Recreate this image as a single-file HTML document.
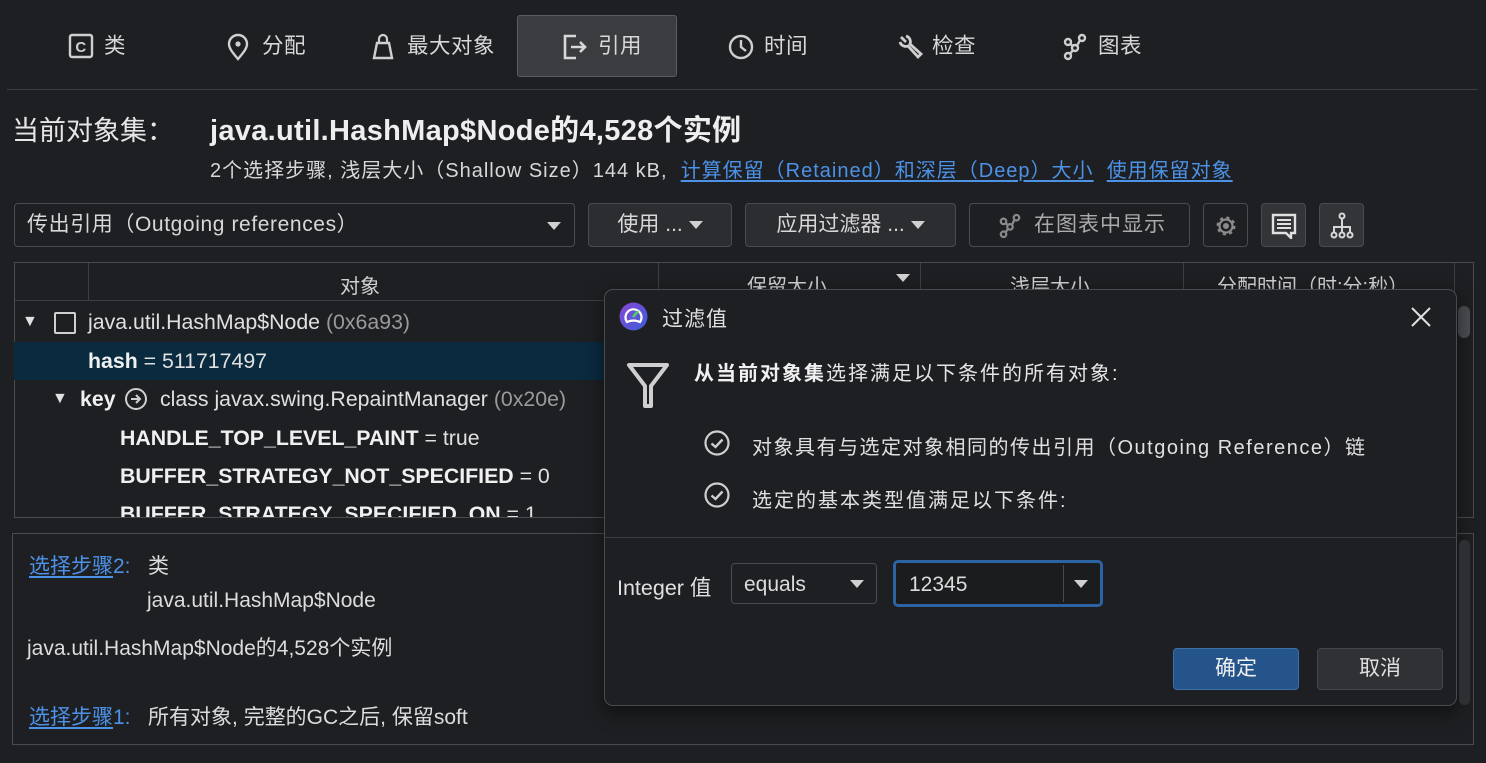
<!DOCTYPE html>
<html><head><meta charset="utf-8"><style>
*{box-sizing:border-box;margin:0;padding:0}
body{width:1486px;height:763px;background:#1e1f22;color:#dcdcdc;font-family:"Liberation Sans","Noto Sans CJK SC",sans-serif;font-size:21px;position:relative;overflow:hidden}
.a{position:absolute;white-space:nowrap}
.tab{position:absolute;top:32px;height:28px;line-height:28px;font-size:21.5px;color:#d8d8d8;letter-spacing:0.5px}
.tab svg{position:absolute;left:0;top:1px}
.btn{position:absolute;top:203px;height:44px;border:1px solid #4a4b4e;border-radius:4px;background:#2c2d30;line-height:42px;font-size:21px;color:#d8d8d8}
.tri{display:inline-block;width:0;height:0;border-left:7px solid transparent;border-right:7px solid transparent;border-top:8px solid #d0d0d0;vertical-align:middle}
.row{position:absolute;left:14px;width:590px;height:38px;line-height:38px;font-size:21.3px;color:#e0e0e0}
b{font-weight:bold;color:#f0f0f0}
.g{color:#9a9a9a}
.lnk{color:#4c92e6;text-decoration:underline;text-underline-offset:3px}
</style></head><body>
<!-- tabs -->
<div class="a" style="left:517px;top:15px;width:160px;height:62px;background:#3b3c3f;border:1px solid #5c5d60;border-radius:3px"></div>
<div class="tab" style="left:68px"><svg width="26" height="26" viewBox="0 0 26 26"><rect x="2" y="2" width="22" height="22" rx="2" fill="none" stroke="#cfcfcf" stroke-width="2.4"/><text x="13" y="19" font-size="15" font-weight="bold" text-anchor="middle" fill="#cfcfcf" font-family="Liberation Sans">C</text></svg><span style="margin-left:36px">类</span></div>
<div class="tab" style="left:226px"><svg width="24" height="28" viewBox="0 0 24 28"><path d="M12 26 C6 19 3 15 3 11 A9 9 0 0 1 21 11 C21 15 18 19 12 26Z" fill="none" stroke="#cfcfcf" stroke-width="2.4"/><circle cx="12" cy="11" r="2.6" fill="#cfcfcf"/></svg><span style="margin-left:36px">分配</span></div>
<div class="tab" style="left:372px"><svg width="22" height="28" viewBox="0 0 22 28"><path d="M7 10 V6 A4 4 0 0 1 15 6 V10" fill="none" stroke="#cfcfcf" stroke-width="2.2"/><path d="M5 10 H17 L20 25 H2 Z" fill="none" stroke="#cfcfcf" stroke-width="2.4"/></svg><span style="margin-left:35px">最大对象</span></div>
<div class="tab" style="left:562px"><svg width="26" height="28" viewBox="0 0 26 28"><path d="M14 3 H3 V25 H14" fill="none" stroke="#d8d8d8" stroke-width="2.6"/><path d="M9 14 H23 M18 9 L23 14 L18 19" fill="none" stroke="#d8d8d8" stroke-width="2.6"/></svg><span style="margin-left:36px">引用</span></div>
<div class="tab" style="left:728px"><svg width="26" height="28" viewBox="0 0 26 28"><circle cx="13" cy="14" r="11" fill="none" stroke="#cfcfcf" stroke-width="2.4"/><path d="M13 7 V14 L18 18" fill="none" stroke="#cfcfcf" stroke-width="2.4"/></svg><span style="margin-left:36px">时间</span></div>
<div class="tab" style="left:897px"><svg width="26" height="28" viewBox="0 0 26 28"><path d="M4 4 L9 9 M3 9 A6 6 0 0 0 11 13 L21 24 L24 21 L13 11 A6 6 0 0 0 9 3" fill="none" stroke="#cfcfcf" stroke-width="2.8"/></svg><span style="margin-left:35px">检查</span></div>
<div class="tab" style="left:1062px"><svg width="26" height="28" viewBox="0 0 26 28"><g fill="none" stroke="#cfcfcf" stroke-width="2.4"><circle cx="20" cy="5" r="3"/><circle cx="6" cy="9" r="3"/><circle cx="13" cy="15" r="3"/><circle cx="6" cy="23" r="3"/><path d="M18 7 L15 13 M8 11 L11 13 M11 17 L8 21"/></g></svg><span style="margin-left:36px">图表</span></div>
<div class="a" style="left:7px;top:89px;width:1471px;height:1px;background:#3e3f42"></div>
<!-- title -->
<div class="a" style="left:12px;top:109px;font-size:27px;color:#e6e6e6">当前对象集：</div>
<div class="a" style="left:210px;top:107px;font-size:29px;letter-spacing:0.3px;font-weight:bold;color:#eeeeee">java.util.HashMap$Node的4,528个实例</div>
<div class="a" style="left:210px;top:154px;font-size:20px;letter-spacing:1px;color:#d8d8d8">2个选择步骤, 浅层大小（Shallow Size）144 kB, &nbsp;<span class="lnk">计算保留（Retained）和深层（Deep）大小</span>&nbsp; <span class="lnk">使用保留对象</span></div>
<!-- controls -->
<div class="btn" style="left:14px;width:561px;background:#1e1f22;padding-left:12px;letter-spacing:0.6px">传出引用（Outgoing references）<span class="tri" style="position:absolute;right:13px;top:18px"></span></div>
<div class="btn" style="left:588px;width:144px;text-align:center">使用 ... <span class="tri"></span></div>
<div class="btn" style="left:745px;width:211px;text-align:center">应用过滤器 ... <span class="tri"></span></div>
<div class="btn" style="left:969px;width:221px;background:#1e1f22;color:#aaa;padding-left:64px;letter-spacing:1px">在图表中显示<svg class="a" style="left:28px;top:9px" width="24" height="26" viewBox="0 0 26 28"><g fill="none" stroke="#8a8a8a" stroke-width="2.4"><circle cx="20" cy="5" r="3"/><circle cx="6" cy="9" r="3"/><circle cx="13" cy="15" r="3"/><circle cx="6" cy="23" r="3"/><path d="M18 7 L15 13 M8 11 L11 13 M11 17 L8 21"/></g></svg></div>
<div class="btn" style="left:1203px;width:45px;background:#1e1f22"><svg class="a" style="left:9px;top:9px" width="26" height="26" viewBox="0 0 26 26"><g transform="translate(13 13)"><circle r="8" fill="none" stroke="#8a8a8a" stroke-width="3" stroke-dasharray="3 3.3"/><circle r="6.5" fill="none" stroke="#8a8a8a" stroke-width="2.2"/><circle r="3" fill="#8a8a8a"/></g></svg></div>
<div class="btn" style="left:1261px;width:45px;background:#333437"><svg class="a" style="left:9px;top:9px" width="26" height="26" viewBox="0 0 26 26"><path d="M2 2 H24 V20 H20 V25 L15 20 H2 Z" fill="none" stroke="#e0e0e0" stroke-width="2.4"/><path d="M6 7 H20 M6 11 H20 M6 15 H20" stroke="#e0e0e0" stroke-width="2"/></svg></div>
<div class="btn" style="left:1319px;width:45px;background:#333437"><svg class="a" style="left:9px;top:8px" width="26" height="28" viewBox="0 0 26 28"><g fill="none" stroke="#d8d8d8" stroke-width="2"><circle cx="13" cy="4" r="2.5"/><circle cx="5" cy="23" r="2.5"/><circle cx="13" cy="23" r="2.5"/><circle cx="21" cy="23" r="2.5"/><path d="M13 7 V20 M5 20 V15 H21 V20"/></g></svg></div>
<!-- table -->
<div class="a" style="left:14px;top:262px;width:1460px;height:256px;border:1px solid #4a4b4e"></div>
<div class="a" style="left:15px;top:300px;width:1440px;height:1px;background:#3e3f42"></div>
<div class="a" style="left:88px;top:263px;width:1px;height:37px;background:#3e3f42"></div>
<div class="a" style="left:658px;top:263px;width:1px;height:37px;background:#3e3f42"></div>
<div class="a" style="left:920px;top:263px;width:1px;height:37px;background:#3e3f42"></div>
<div class="a" style="left:1183px;top:263px;width:1px;height:37px;background:#3e3f42"></div>
<div class="a" style="left:1454px;top:263px;width:1px;height:254px;background:#3e3f42"></div>
<div class="a" style="left:340px;top:270px;font-size:20px;color:#d0d0d0">对象</div>
<div class="a" style="left:747px;top:270px;font-size:20px;color:#d0d0d0">保留大小</div>
<span class="tri a" style="left:896px;top:274px"></span>
<div class="a" style="left:1010px;top:270px;font-size:20px;color:#d0d0d0">浅层大小</div>
<div class="a" style="left:1217px;top:270px;font-size:20px;color:#d0d0d0">分配时间（时:分:秒）</div>
<div class="a" style="left:1458px;top:306px;width:12px;height:32px;border-radius:6px;background:#4a4c50"></div>
<div class="row" style="top:303px"><span class="a" style="left:8px;font-size:16px">▼</span><span class="a" style="left:40px;top:9px;width:22px;height:22px;border:2px solid #cfcfcf;border-radius:2px"></span><span class="a" style="left:74px">java.util.HashMap$Node <span class="g">(0x6a93)</span></span></div>
<div class="row" style="top:342px;background:#0a2a3f"><span class="a" style="left:74px"><b>hash</b> = 511717497</span></div>
<div class="row" style="top:380px"><span class="a" style="left:38px;font-size:16px">▼</span><span class="a" style="left:66px"><b>key</b></span><svg class="a" style="left:110px;top:7px" width="24" height="24" viewBox="0 0 24 24"><circle cx="12" cy="12" r="10" fill="none" stroke="#cfcfcf" stroke-width="2"/><path d="M7 12 H16 M12 8 L16 12 L12 16" fill="none" stroke="#cfcfcf" stroke-width="2"/></svg><span class="a" style="left:146px">class javax.swing.RepaintManager <span class="g">(0x20e)</span></span></div>
<div class="row" style="top:419px"><span class="a" style="left:106px"><b>HANDLE_TOP_LEVEL_PAINT</b> = true</span></div>
<div class="row" style="top:457px"><span class="a" style="left:106px"><b>BUFFER_STRATEGY_NOT_SPECIFIED</b> = 0</span></div>
<div class="a" style="left:15px;top:495px;width:590px;height:22px;overflow:hidden"><div class="a" style="left:105px;top:0;font-size:21.3px;line-height:38px;color:#e0e0e0"><b>BUFFER_STRATEGY_SPECIFIED_ON</b> = 1</div></div>
<!-- bottom panel -->
<div class="a" style="left:12px;top:533px;width:1462px;height:212px;border:1px solid #4a4b4e"></div>
<div class="a" style="left:29px;top:550px;font-size:21px"><span class="lnk">选择步骤</span><span style="color:#4c92e6">2:</span>&nbsp;&nbsp; 类</div>
<div class="a" style="left:147px;top:589px;font-size:21px">java.util.HashMap$Node</div>
<div class="a" style="left:27px;top:632px;font-size:21px">java.util.HashMap$Node的4,528个实例</div>
<div class="a" style="left:29px;top:701px;font-size:21px"><span class="lnk">选择步骤</span><span style="color:#4c92e6">1:</span>&nbsp;&nbsp; 所有对象, 完整的GC之后, 保留soft</div>
<!-- dialog -->
<div class="a" style="left:604px;top:289px;width:853px;height:417px;background:#1e1f22;border:1px solid #4a4b4e;border-radius:9px;box-shadow:0 6px 18px rgba(0,0,0,.5)"></div>
<div class="a" style="left:1459px;top:540px;width:11px;height:165px;border-radius:5px;background:#2d2f32"></div>
<svg class="a" style="left:619px;top:302px" width="29" height="29" viewBox="0 0 29 29"><defs><linearGradient id="lg" x1="0" y1="0" x2="1" y2="1"><stop offset="0" stop-color="#8b45d6"/><stop offset="1" stop-color="#3a5fd8"/></linearGradient></defs><circle cx="14.5" cy="14.5" r="14" fill="url(#lg)"/><path d="M8 20 A8 8 0 1 1 21 20 Q14.5 17 8 20Z" fill="none" stroke="#fff" stroke-width="2.2"/><path d="M14 15 L19 9" stroke="#4ed16a" stroke-width="2.6"/></svg>
<div class="a" style="left:662px;top:303px;font-size:21px;letter-spacing:1px;color:#e0e0e0">过滤值</div>
<svg class="a" style="left:1410px;top:306px" width="22" height="22" viewBox="0 0 22 22"><path d="M2 2 L20 20 M20 2 L2 20" stroke="#e0e0e0" stroke-width="2"/></svg>
<svg class="a" style="left:626px;top:362px" width="44" height="46" viewBox="0 0 44 46"><path d="M3 3 H41 L25 24 V44 H19 V24 Z" fill="none" stroke="#cfcfcf" stroke-width="4" stroke-linejoin="round"/></svg>
<div class="a" style="left:694px;top:357px;font-size:20px;letter-spacing:2px;color:#e6e6e6"><b>从当前对象集</b>选择满足以下条件的所有对象:</div>
<svg class="a" style="left:704px;top:430px" width="26" height="26" viewBox="0 0 26 26"><circle cx="13" cy="13" r="11.5" fill="none" stroke="#cfcfcf" stroke-width="2.2"/><path d="M7.5 13.5 L11.5 17 L18.5 9.5" fill="none" stroke="#cfcfcf" stroke-width="2.4"/></svg>
<div class="a" style="left:752px;top:431px;font-size:20px;letter-spacing:1.5px;color:#e0e0e0">对象具有与选定对象相同的传出引用（Outgoing Reference）链</div>
<svg class="a" style="left:704px;top:482px" width="26" height="26" viewBox="0 0 26 26"><circle cx="13" cy="13" r="11.5" fill="none" stroke="#cfcfcf" stroke-width="2.2"/><path d="M7.5 13.5 L11.5 17 L18.5 9.5" fill="none" stroke="#cfcfcf" stroke-width="2.4"/></svg>
<div class="a" style="left:752px;top:484px;font-size:20px;letter-spacing:2px;color:#e0e0e0">选定的基本类型值满足以下条件:</div>
<div class="a" style="left:605px;top:537px;width:851px;height:1px;background:#3e3f42"></div>
<div class="a" style="left:617px;top:571px;font-size:21.5px;color:#e0e0e0">Integer 值</div>
<div class="a" style="left:731px;top:563px;width:146px;height:41px;border:1px solid #4a4b4e;border-radius:4px;padding-left:12px;line-height:41px;font-size:21px">equals<span class="tri" style="position:absolute;right:12px;top:16px"></span></div>
<div class="a" style="left:893px;top:560px;width:210px;height:47px;border:3px solid #2c63a3;border-radius:5px;background:#1b1c1e;padding-left:13px;line-height:43px;font-size:21px">12345<div class="a" style="left:167px;top:2px;width:1px;height:37px;background:#4a4b4e"></div><span class="tri" style="position:absolute;right:12px;top:17px"></span></div>
<div class="a" style="left:1173px;top:648px;width:126px;height:42px;border:1px solid #3a6fa8;border-radius:4px;background:#24548a;text-align:center;line-height:40px;font-size:21px;color:#f0f0f0">确定</div>
<div class="a" style="left:1317px;top:648px;width:126px;height:42px;border:1px solid #45464a;border-radius:4px;background:#303134;text-align:center;line-height:40px;font-size:21px;color:#e0e0e0">取消</div>
</body></html>
